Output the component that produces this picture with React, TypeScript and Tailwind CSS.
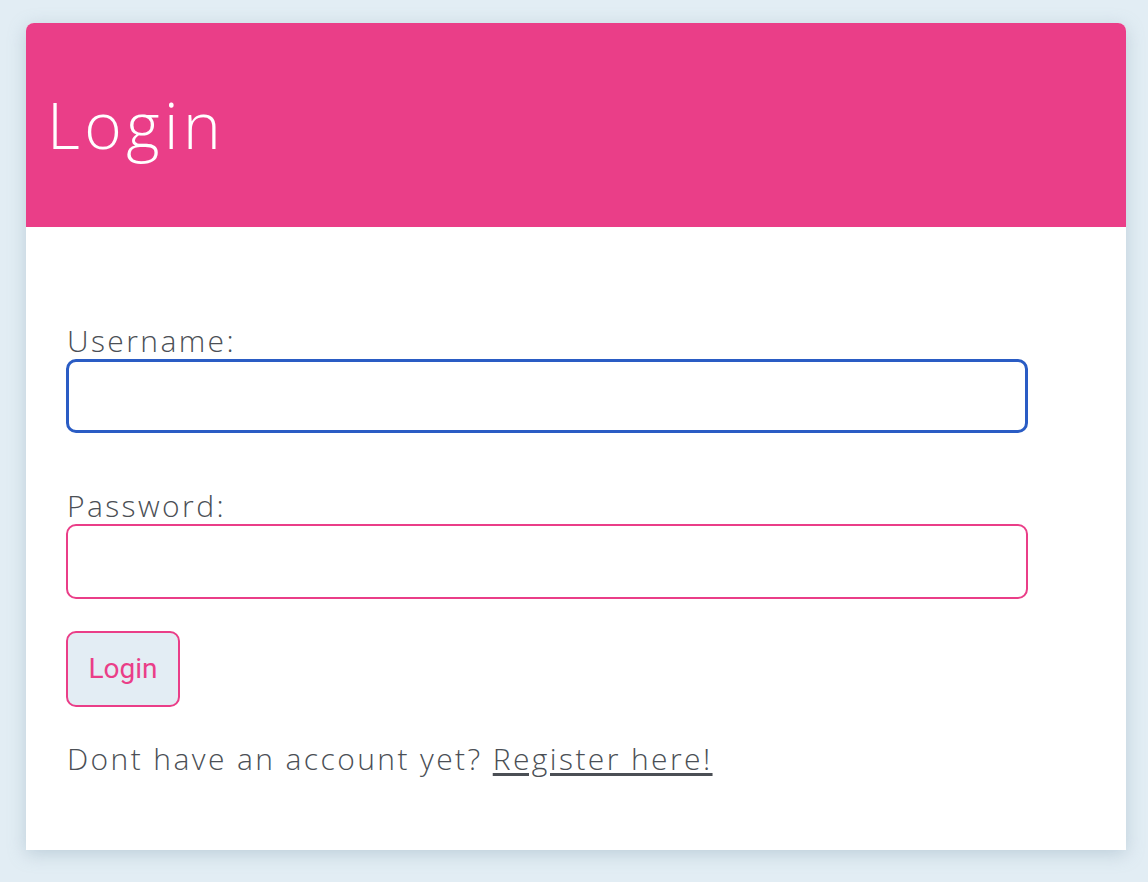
import React from "react";

export default function App() {
  return (
    <div
      className="min-h-[882px] bg-[#e2edf4] pt-[23px] pl-[26px] pr-[22px] pb-[32px]"
      style={{ fontFamily: '"Open Sans", "Liberation Sans", sans-serif' }}
    >
      <div className="w-[1100px] bg-white shadow-[0_4px_18px_rgba(120,150,170,0.35)] rounded-t-[8px]">
        <div className="h-[204px] bg-[#ea3e88] rounded-t-[8px] flex items-center pl-[21px]">
          <h1 className="text-[64px] font-light text-white leading-none tracking-[0.07em]">Login</h1>
        </div>
        <form className="px-[40px] pt-[96px] pb-[73px] text-[#4b4f55]">
          <label className="block pl-px text-[30px] font-light leading-[36px] tracking-[0.08em]">Username:</label>
          <input
            type="text"
            className="block w-[962px] h-[74px] rounded-[10px] border-[3px] border-[#2a5cc4] outline-none"
          />
          <label className="block pl-px mt-[55px] text-[30px] font-light leading-[36px] tracking-[0.08em]">Password:</label>
          <input
            type="password"
            className="block w-[962px] h-[75px] rounded-[10px] border-2 border-[#ea3e88] outline-none"
          />
          <button
            type="button"
            className="mt-[32px] w-[114px] h-[76px] rounded-[10px] border-2 border-[#ea3e88] bg-[#e3edf4] text-[#ea3e88] text-[28px]"
            style={{ fontFamily: 'Roboto, "Liberation Sans", sans-serif' }}
          >
            Login
          </button>
          <p className="mt-[34px] pl-px text-[30px] font-light leading-[36px] tracking-[0.08em]">
            Dont have an account yet?{" "}
            <a href="#" className="underline decoration-[3px] underline-offset-[3px]">
              Register here!
            </a>
          </p>
        </form>
      </div>
    </div>
  );
}
